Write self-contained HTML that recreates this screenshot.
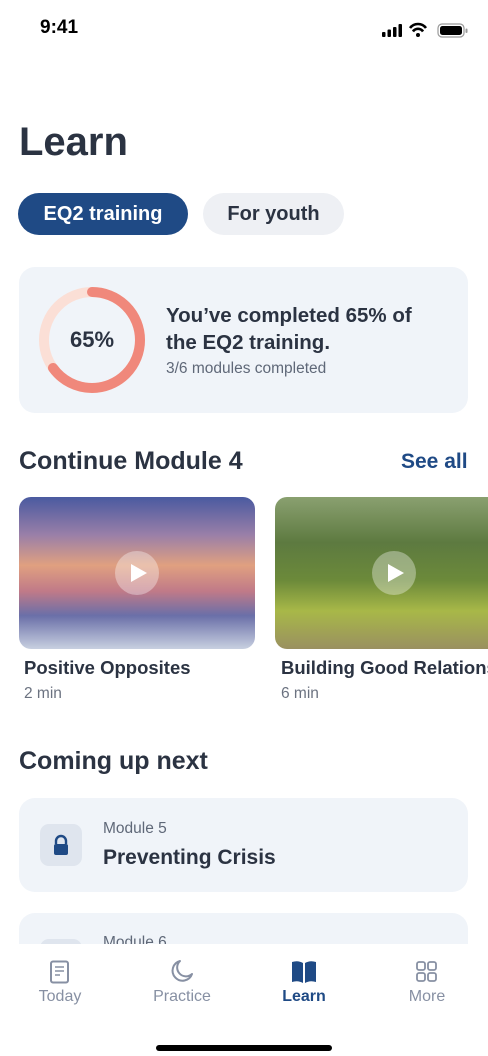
<!DOCTYPE html>
<html><head><style>
*{margin:0;padding:0;box-sizing:border-box}
html,body{width:488px;height:1056px;overflow:hidden}
body{background:#fff;font-family:"Liberation Sans",sans-serif;color:#2b3342;position:relative}
#w{position:absolute;left:0;top:0;width:488px;height:1056px;overflow:hidden}
.abs{position:absolute}
</style></head><body><div id="w">
<div class="abs" style="left:40px;top:17px;font-size:19px;font-weight:bold;color:#000">9:41</div>
<svg class="abs" style="left:382px;top:22px" width="88" height="18" viewBox="0 0 88 18">
<rect x="0" y="10" width="3.5" height="5" rx="1" fill="#000"/><rect x="5.5" y="7.5" width="3.5" height="7.5" rx="1" fill="#000"/><rect x="11" y="5" width="3.5" height="10" rx="1" fill="#000"/><rect x="16.5" y="2" width="3.5" height="13" rx="1" fill="#000"/>
<path d="M28 6 A10 10 0 0 1 44 6" stroke="#000" stroke-width="2.6" fill="none"/><path d="M31 9.5 A6 6 0 0 1 41 9.5" stroke="#000" stroke-width="2.6" fill="none"/><circle cx="36" cy="13" r="2" fill="#000"/>
<rect x="56" y="2" width="26" height="13" rx="4" stroke="#999" stroke-width="1.2" fill="none"/><rect x="58" y="4" width="22" height="9" rx="2.5" fill="#000"/><rect x="83.5" y="6.5" width="2" height="4.5" rx="1" fill="#999"/>
</svg>
<div class="abs" style="left:19px;top:120px;font-size:40px;font-weight:bold">Learn</div>
<div class="abs" style="left:18px;top:193px;width:170px;height:42px;border-radius:21px;background:#1f4a85;color:#fff;font-size:20px;font-weight:bold;text-align:center;line-height:43px">EQ2 training</div>
<div class="abs" style="left:203px;top:193px;width:141px;height:42px;border-radius:21px;background:#eef0f4;font-size:20px;font-weight:bold;text-align:center;line-height:43px">For youth</div>
<div class="abs" style="left:19px;top:267px;width:449px;height:146px;border-radius:16px;background:#f0f4f9"></div>
<svg class="abs" style="left:38px;top:286px" width="108" height="108" viewBox="0 0 108 108">
<circle cx="54" cy="54" r="48" stroke="#fbdfd6" stroke-width="10" fill="none"/>
<circle cx="54" cy="54" r="48" stroke="#f0887b" stroke-width="10" fill="none" stroke-linecap="round" stroke-dasharray="196 400" transform="rotate(-90 54 54)"/>
</svg>
<div class="abs" style="left:38px;top:327px;width:108px;text-align:center;font-size:22px;font-weight:bold">65%</div>
<div class="abs" style="left:166px;top:302px;font-size:20.5px;font-weight:bold;line-height:27px;white-space:nowrap">You’ve completed 65% of<br>the EQ2 training.</div>
<div class="abs" style="left:166px;top:360px;font-size:15.5px;color:#5f6878">3/6 modules completed</div>
<div class="abs" style="left:19px;top:447px;font-size:25px;font-weight:bold">Continue Module 4</div>
<div class="abs" style="left:401px;top:450px;font-size:21px;font-weight:bold;color:#1f4a85">See all</div>
<div class="abs" style="left:19px;top:497px;width:236px;height:152px;border-radius:12px;overflow:hidden;background:linear-gradient(180deg,#4a5aa0 0%,#9a7fa8 25%,#e0a080 45%,#c07a88 62%,#6a6fa8 78%,#c8d0e0 100%)"></div>
<div class="abs" style="left:275px;top:497px;width:213px;height:152px;border-radius:12px 0 0 12px;overflow:hidden;background:linear-gradient(180deg,#8aa070 0%,#5d7a40 30%,#6c8a3a 55%,#a8b848 75%,#9a9060 100%)"></div>
<div class="abs" style="left:115px;top:551px;width:44px;height:44px;border-radius:50%;background:rgba(255,255,255,.35)"></div>
<svg class="abs" style="left:129px;top:563px" width="20" height="20"><path d="M2 1 L18 10 L2 19Z" fill="#fff"/></svg>
<div class="abs" style="left:372px;top:551px;width:44px;height:44px;border-radius:50%;background:rgba(255,255,255,.35)"></div>
<svg class="abs" style="left:386px;top:563px" width="20" height="20"><path d="M2 1 L18 10 L2 19Z" fill="#fff"/></svg>
<div class="abs" style="left:24px;top:657px;font-size:18.5px;font-weight:bold">Positive Opposites</div>
<div class="abs" style="left:24px;top:685px;font-size:15.5px;color:#6b7280">2 min</div>
<div class="abs" style="left:281px;top:657px;font-size:18.5px;font-weight:bold;white-space:nowrap">Building Good Relationships</div>
<div class="abs" style="left:281px;top:685px;font-size:15.5px;color:#6b7280">6 min</div>
<div class="abs" style="left:19px;top:747px;font-size:25px;font-weight:bold">Coming up next</div>
<div class="abs" style="left:19px;top:798px;width:449px;height:94px;border-radius:16px;background:#f0f4f9"></div>
<div class="abs" style="left:40px;top:824px;width:42px;height:42px;border-radius:9px;background:#dfe5ee"></div>
<svg class="abs" style="left:51px;top:834px" width="20" height="22"><path d="M5 10 V7 A5 5 0 0 1 15 7 V10" stroke="#1f4a85" stroke-width="2.4" fill="none"/><rect x="3" y="10" width="14" height="11" rx="2" fill="#1f4a85"/></svg>
<div class="abs" style="left:103px;top:820px;font-size:15.5px;color:#5f6878">Module 5</div>
<div class="abs" style="left:103px;top:846px;font-size:21px;font-weight:bold">Preventing Crisis</div>
<div class="abs" style="left:19px;top:913px;width:449px;height:94px;border-radius:16px;background:#f0f4f9"></div>
<div class="abs" style="left:40px;top:939px;width:42px;height:42px;border-radius:9px;background:#dfe5ee"></div>
<div class="abs" style="left:103px;top:934px;font-size:15.5px;color:#5f6878">Module 6</div>
<div class="abs" style="left:0;top:944px;width:488px;height:112px;background:#fff"></div>
<svg class="abs" style="left:49px;top:960px" width="22" height="24"><rect x="2" y="1.5" width="17" height="21" rx="2" stroke="#8790a3" stroke-width="2" fill="none"/><path d="M6 7h9M6 11h9M6 15h5" stroke="#8790a3" stroke-width="1.6"/></svg>
<div class="abs" style="left:0;top:988px;width:120px;text-align:center;font-size:16px;color:#8790a3">Today</div>
<svg class="abs" style="left:170px;top:959px" width="24" height="24"><path d="M10 2 A10 10 0 1 0 22 15 A8 8 0 0 1 10 2Z" stroke="#8790a3" stroke-width="2" fill="none" stroke-linejoin="round"/></svg>
<div class="abs" style="left:122px;top:988px;width:120px;text-align:center;font-size:16px;color:#8790a3">Practice</div>
<svg class="abs" style="left:291px;top:960px" width="26" height="24"><path d="M1 2 Q7 0 12 3 V23 Q7 20 1 22Z M25 2 Q19 0 14 3 V23 Q19 20 25 22Z" fill="#1f4a85"/></svg>
<div class="abs" style="left:244px;top:988px;width:120px;text-align:center;font-size:16px;font-weight:bold;color:#1f4a85">Learn</div>
<svg class="abs" style="left:416px;top:961px" width="22" height="22"><g stroke="#8790a3" stroke-width="1.8" fill="none"><rect x="1" y="1" width="8" height="8" rx="2"/><rect x="12" y="1" width="8" height="8" rx="2"/><rect x="1" y="12" width="8" height="8" rx="2"/><rect x="12" y="12" width="8" height="8" rx="2"/></g></svg>
<div class="abs" style="left:367px;top:988px;width:120px;text-align:center;font-size:16px;color:#8790a3">More</div>
<div class="abs" style="left:156px;top:1045px;width:176px;height:6px;border-radius:3px;background:#000"></div>
</div></body></html>
